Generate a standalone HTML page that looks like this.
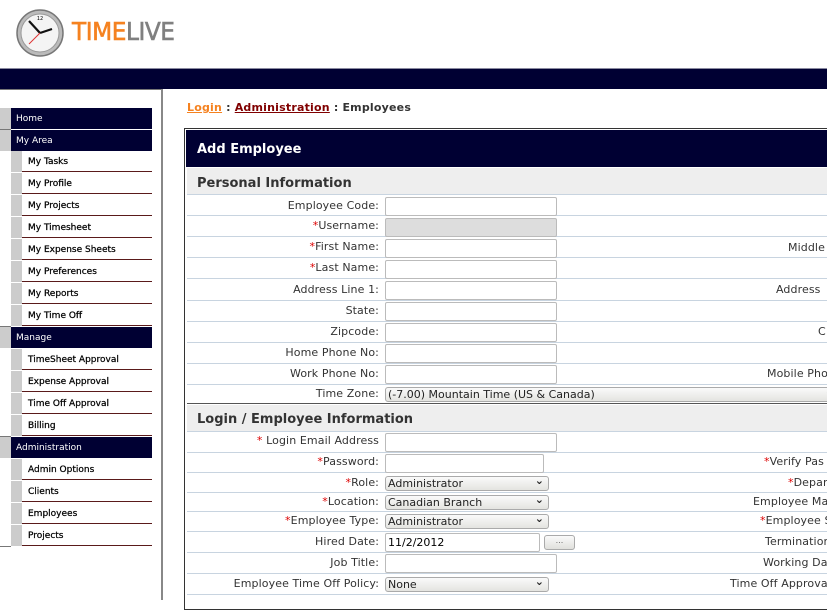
<!DOCTYPE html>
<html><head><style>
body{margin:0;width:827px;height:600px;overflow:hidden;background:#fff;font-family:"DejaVu Sans","Liberation Sans",sans-serif;position:relative}
.a{position:absolute}
.bar{left:0;top:68px;width:827px;height:20px;background:#000033;border-top:1px solid #8a8aa0}
.m{position:absolute;left:11px;width:141px;height:21px;font-size:9px;line-height:23px}
.h{background:#000033;color:#fff;padding-left:5px;width:136px}
.h:before{content:"";position:absolute;left:-11px;top:0;width:11px;height:21px;background:#ccc}
.i{background:#fff;color:#000;border-bottom:1px solid #5a1a1a;height:20px;padding-left:17px;width:124px;-webkit-text-stroke:0.25px #000}
.i:before{content:"";position:absolute;left:0;top:0;width:11px;height:21px;background:#ccc}
.lbl{position:absolute;right:448px;font-size:11px;color:#333;text-align:right;white-space:nowrap;letter-spacing:.1px}
.r{position:absolute;left:187px;width:640px;border-bottom:1px solid #c8d4e0}
.req{color:#d00}
.in{position:absolute;left:385px;width:170px;height:17px;border:1px solid #bbb;border-radius:2px;background:#fff}
.sel{position:absolute;left:385px;width:160px;height:13px;border:1px solid #aaa;border-radius:3px;background:linear-gradient(#fafafa,#e4e4e0);font-size:11px;line-height:13px;padding-left:2px;color:#222}
.sel:after{content:"⌄";position:absolute;right:4px;top:-3px;font-size:11px;font-weight:bold}
.rl{position:absolute;font-size:11px;color:#333;white-space:nowrap;letter-spacing:.1px}
.sec{position:absolute;left:187px;width:640px;background:#eeeeee;font-weight:bold;font-size:13px;color:#333;padding-left:10px;box-sizing:border-box;border-bottom:1px solid #c8d4e0}
</style></head><body>
<svg class="a" style="left:15px;top:8px" width="50" height="50" viewBox="0 0 50 50">
<circle cx="25" cy="25" r="23" fill="#bbb" stroke="#777" stroke-width="1.5"/>
<circle cx="25" cy="25" r="19" fill="#f4f4f4" stroke="#999"/>
<line x1="25" y1="25" x2="14" y2="13" stroke="#111" stroke-width="2.2"/>
<line x1="25" y1="25" x2="37" y2="21" stroke="#111" stroke-width="2.2"/>
<line x1="25" y1="25" x2="14" y2="36" stroke="#d33" stroke-width="1"/>
<text x="25" y="12" font-size="5" text-anchor="middle">12</text>
</svg>
<div class="a" style="left:72px;top:17px;font-size:25px;font-family:'DejaVu Sans',sans-serif;letter-spacing:-0.5px;transform:scaleX(0.93);transform-origin:left;-webkit-text-stroke:0.6px"><span style="color:#f58220">TIME</span><span style="color:#808080">LIVE</span></div>
<div class="a bar"></div>
<div class="a" style="left:0;top:89px;width:162px;height:1px;background:#777"></div>
<div class="a" style="left:161px;top:89px;width:2px;height:511px;background:#888"></div>
<div class="a" style="left:0;top:129px;width:11px;height:1px;background:#777"></div>
<div class="a" style="left:0;top:326px;width:11px;height:1px;background:#777"></div>
<div class="a" style="left:0;top:436px;width:11px;height:1px;background:#777"></div>
<div class="a" style="left:0;top:546px;width:11px;height:1px;background:#777"></div>
<div class="m h" style="top:108px">Home</div>
<div class="m h" style="top:130px">My Area</div>
<div class="m i" style="top:151px">My Tasks</div>
<div class="m i" style="top:173px">My Profile</div>
<div class="m i" style="top:195px">My Projects</div>
<div class="m i" style="top:217px">My Timesheet</div>
<div class="m i" style="top:239px">My Expense Sheets</div>
<div class="m i" style="top:261px">My Preferences</div>
<div class="m i" style="top:283px">My Reports</div>
<div class="m i" style="top:305px">My Time Off</div>
<div class="m h" style="top:327px">Manage</div>
<div class="m i" style="top:349px">TimeSheet Approval</div>
<div class="m i" style="top:371px">Expense Approval</div>
<div class="m i" style="top:393px">Time Off Approval</div>
<div class="m i" style="top:415px">Billing</div>
<div class="m h" style="top:437px">Administration</div>
<div class="m i" style="top:459px">Admin Options</div>
<div class="m i" style="top:481px">Clients</div>
<div class="m i" style="top:503px">Employees</div>
<div class="m i" style="top:525px">Projects</div>
<div class="a" style="left:187px;top:101px;font-size:11px;font-weight:bold;color:#333;letter-spacing:.2px"><u style="color:#f58220">Login</u> : <u style="color:#800000">Administration</u> : Employees</div>
<div class="a" style="left:184px;top:128px;width:650px;height:480px;border:1px solid #333"></div>
<div class="a" style="left:186px;top:130px;width:641px;height:37px;background:#000033;color:#fff;font-weight:bold;font-size:13px;line-height:40px;padding-left:11px;box-sizing:border-box">Add Employee</div>
<div class="sec" style="top:168px;height:27px;line-height:31px">Personal Information</div>
<div class="r" style="top:195px;height:20px"></div><div class="r" style="top:216px;height:20px"></div><div class="r" style="top:237px;height:20px"></div><div class="r" style="top:258px;height:20px"></div><div class="r" style="top:279px;height:21px"></div><div class="r" style="top:301px;height:20px"></div><div class="r" style="top:322px;height:20px"></div><div class="r" style="top:343px;height:20px"></div><div class="r" style="top:364px;height:20px"></div>
<div class="a" style="left:187px;top:385px;width:640px;height:18px;border-bottom:1px solid #555"></div>
<div class="sec" style="top:405px;height:27px;line-height:29px">Login / Employee Information</div>
<div class="r" style="top:432px;height:20px"></div><div class="r" style="top:453px;height:19px"></div><div class="r" style="top:473px;height:19px"></div><div class="r" style="top:493px;height:18px"></div><div class="r" style="top:512px;height:19px"></div><div class="r" style="top:532px;height:20px"></div><div class="r" style="top:553px;height:20px"></div><div class="r" style="top:574px;height:20px"></div>
<div class="lbl" style="top:199px">Employee Code:</div><div class="in" style="top:197px"></div>
<div class="lbl" style="top:219px"><span class="req">*</span>Username:</div><div class="in" style="top:218px;background:#ddd"></div>
<div class="lbl" style="top:240px"><span class="req">*</span>First Name:</div><div class="in" style="top:239px"></div>
<div class="lbl" style="top:261px"><span class="req">*</span>Last Name:</div><div class="in" style="top:260px"></div>
<div class="lbl" style="top:283px">Address Line 1:</div><div class="in" style="top:281px"></div>
<div class="lbl" style="top:304px">State:</div><div class="in" style="top:302px"></div>
<div class="lbl" style="top:325px">Zipcode:</div><div class="in" style="top:323px"></div>
<div class="lbl" style="top:346px">Home Phone No:</div><div class="in" style="top:344px"></div>
<div class="lbl" style="top:367px">Work Phone No:</div><div class="in" style="top:365px"></div>
<div class="lbl" style="top:387px">Time Zone:</div><div class="sel" style="top:387px;width:450px">(-7.00) Mountain Time (US &amp; Canada)</div>
<div class="rl" style="left:788px;top:241px">Middle</div>
<div class="rl" style="left:776px;top:283px">Address</div>
<div class="rl" style="left:818px;top:325px">C</div>
<div class="rl" style="left:767px;top:367px">Mobile Pho</div>
<div class="lbl" style="top:434px"><span class="req">*</span> Login Email Address</div><div class="in" style="top:433px"></div>
<div class="lbl" style="top:455px"><span class="req">*</span>Password:</div><div class="in" style="top:454px;width:157px"></div>
<div class="lbl" style="top:476px"><span class="req">*</span>Role:</div><div class="sel" style="top:476px">Administrator</div>
<div class="lbl" style="top:495px"><span class="req">*</span>Location:</div><div class="sel" style="top:495px">Canadian Branch</div>
<div class="lbl" style="top:514px"><span class="req">*</span>Employee Type:</div><div class="sel" style="top:514px">Administrator</div>
<div class="lbl" style="top:535px">Hired Date:</div><div class="in" style="top:533px;font-size:11px;line-height:17px;padding-left:2px;width:151px">11/2/2012</div>
<div class="a" style="left:544px;top:535px;width:29px;height:13px;border:1px solid #aaa;border-radius:3px;background:linear-gradient(#fafafa,#e0e0dc);font-size:8px;text-align:center;line-height:10px;color:#666">...</div>
<div class="lbl" style="top:556px">Job Title:</div><div class="in" style="top:554px"></div>
<div class="lbl" style="top:577px">Employee Time Off Policy:</div><div class="sel" style="top:577px">None</div>
<div class="rl" style="left:764px;top:455px"><span class="req">*</span>Verify Pas</div>
<div class="rl" style="left:788px;top:476px"><span class="req">*</span>Depar</div>
<div class="rl" style="left:753px;top:495px">Employee Ma</div>
<div class="rl" style="left:760px;top:514px"><span class="req">*</span>Employee S</div>
<div class="rl" style="left:765px;top:535px">Termination</div>
<div class="rl" style="left:763px;top:556px">Working Day</div>
<div class="rl" style="left:730px;top:577px">Time Off Approva</div>
</body></html>
